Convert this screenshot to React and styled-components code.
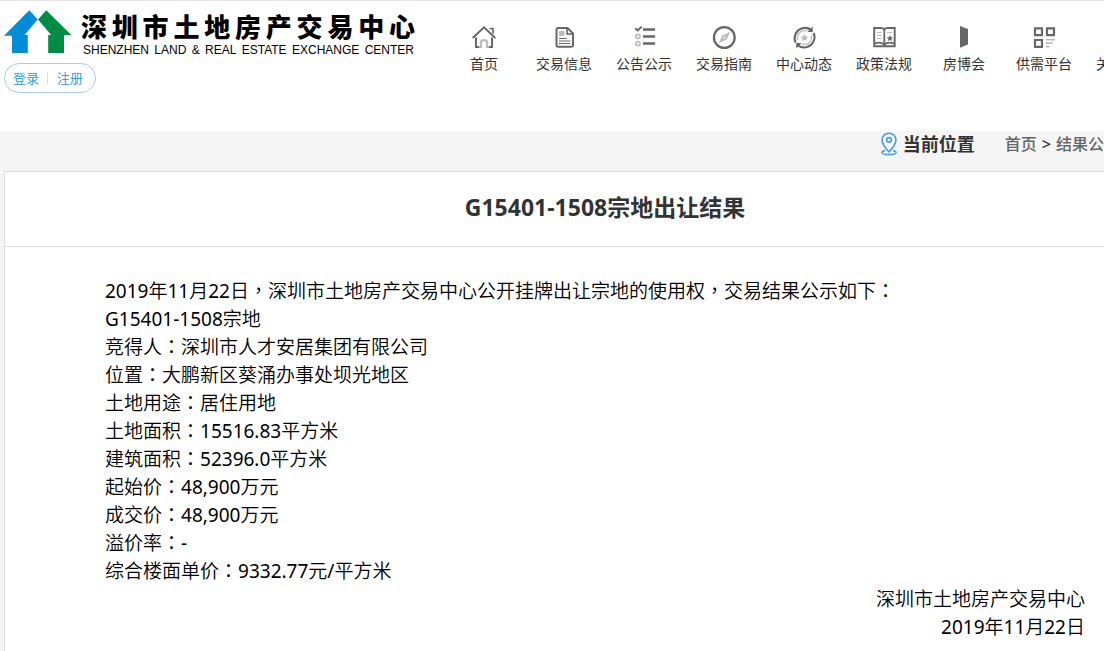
import React from 'react';
import styled, { createGlobalStyle } from 'styled-components';

const GlobalStyle = createGlobalStyle`
  * {
    box-sizing: border-box;
  }

  body {
    margin: 0;
    overflow-x: hidden;
    background: #fff;
    color: #000;
    font-family: "Noto Sans", "Noto Sans CJK SC", sans-serif;
  }

  a {
    color: inherit;
    text-decoration: none;
  }
`;

const Page = styled.div`
  min-width: 1206px;
  border-top: 1px solid #e6e6e6;
`;

const Header = styled.header`
  display: flex;
  height: 130px;
  padding-left: 4px;
`;

const Brand = styled.div`
  width: 440px;
`;

const Logo = styled.a`
  display: flex;
  gap: 9px;
  padding-top: 9px;
  color: #000;
`;

const LogoText = styled.div`
  width: 334px;
`;

const LogoName = styled.div`
  display: flex;
  justify-content: space-between;
  font-size: 26px;
  font-weight: 900;
  line-height: 34px;
`;

const LogoSub = styled.div`
  display: flex;
  justify-content: space-between;
  padding: 0 1px 0 2px;
  font-family: "Liberation Sans", sans-serif;
  font-size: 12px;
  line-height: 12px;
`;

const Account = styled.div`
  display: inline-flex;
  align-items: center;
  height: 30px;
  margin-top: 7px;
  padding: 0 12px 0 8px;
  border: 1px solid #a9c8fb;
  border-radius: 15px;
  color: #1296e6;
  font-family: "Noto Sans", "Noto Sans CJK SC DemiLight", "Noto Sans CJK SC", sans-serif;
  font-size: 13px;
  line-height: 20px;
`;

const Divider = styled.span`
  width: 1px;
  height: 12px;
  margin: 0 9px 0 8px;
  background: #ddd;
`;

const Nav = styled.nav`
  display: flex;
`;

const NavItem = styled.a`
  display: flex;
  flex-direction: column;
  align-items: center;
  gap: 5px;
  width: 80px;
  padding-top: 24px;
  color: #333;
  font-size: 14px;
  line-height: 20px;
`;

const Main = styled.main`
  padding-left: 4px;
  background: #f5f5f5;
`;

const Crumbs = styled.div`
  display: flex;
  justify-content: flex-end;
  height: 40px;
  padding-right: 86px;
  color: #666;
  font-size: 16px;
  font-weight: 500;
  line-height: 26px;

  > svg {
    margin: 1px 5px 0 0;
  }
`;

const CrumbTitle = styled.strong`
  margin-right: 30px;
  color: #333;
  font-size: 18px;
`;

const Arrow = styled.span`
  margin: 0 5px;
  color: #333;
`;

const Card = styled.article`
  border: 1px solid #ddd;
  background: #fff;
`;

const Title = styled.h1`
  margin: 0;
  padding: 19px 0 23px;
  border-bottom: 1px solid #ddd;
  color: #333;
  font-size: 23px;
  line-height: 32px;
  text-align: center;
`;

const Content = styled.div`
  padding: 30px 120px 40px 100px;
  font-family: "Noto Sans", "Noto Sans CJK SC DemiLight", "Noto Sans CJK SC", sans-serif;
  font-size: 19px;
  line-height: 28px;
`;

const Line = styled.p`
  margin: 0;
  text-align: ${props => props.$align || 'left'};
`;

const Mark = styled.span`
  font-family: "Noto Sans CJK TC DemiLight", "Noto Sans CJK TC", sans-serif;
  line-height: 1;
`;

const NAME = '深圳市土地房产交易中心';

const DARK = '#666';
const LIGHT = '#bbb';

const STAR = 'M0 -4 L1.2 -1.3 L4 -1.1 L1.9 .8 L2.6 3.6 L0 2.1 L-2.6 3.6 L-1.9 .8 L-4 -1.1 L-1.2 -1.3 Z';

const icons = {
  home: (
    <>
      <path d="M.7 13 L12 2.3 L23.3 13" stroke={DARK} strokeWidth="1.9" />
      <path d="M17.5 3.5 H21 V8.5" stroke={DARK} strokeWidth="1.7" />
      <path d="M4 12.5 V22 H7.4 M20 12.5 V22 H16.6" stroke={DARK} strokeWidth="2" />
      <path d="M9 23 V17.5 Q9 15.2 12 15.2 T15 17.5 V23" stroke={LIGHT} strokeWidth="2.2" />
    </>
  ),
  doc: (
    <>
      <path d="M6 3 H15.5 L21 8.5 V20 Q21 21.7 19.3 21.7 H6 Q4.5 21.7 4.5 20 V4.6 Q4.5 3 6 3 Z" stroke={DARK} strokeWidth="2" />
      <path d="M15 3.5 V9 H20.5" stroke={DARK} strokeWidth="1.6" />
      <rect x="7" y="6" width="5.5" height="5" rx="1" fill={LIGHT} />
      <path d="M7 13.5 H14.5 M7 16 H18.5 M7 18.5 H18.5" stroke={DARK} strokeWidth="1.2" />
    </>
  ),
  list: (
    <>
      <path d="M3.2 3.2 L5.7 5.4 L9.6 1.8" stroke={DARK} strokeWidth="2.1" />
      <path d="M11 4.5 H23 M11 11.5 H23 M11 18.5 H23" stroke={DARK} strokeWidth="2.6" />
      <circle cx="6" cy="11.4" r="2.1" stroke={LIGHT} strokeWidth="1.7" />
      <circle cx="6" cy="18.6" r="2.1" stroke={LIGHT} strokeWidth="1.7" />
    </>
  ),
  compass: (
    <>
      <circle cx="12.3" cy="12.5" r="10.4" stroke={DARK} strokeWidth="2.2" />
      <path d="M18.3 6.8 L14.6 14.6 L6.6 18.3 L10.2 10.4 Z" fill={LIGHT} />
      <circle cx="12.4" cy="12.5" r="1" fill="#fff" />
    </>
  ),
  news: (
    <>
      <path d="M3.6 17.5 A10.4 10.4 0 0 1 19.2 4.8 M21.6 8 A10.4 10.4 0 0 1 6.2 20.7" stroke={DARK} strokeWidth="2.2" />
      <path d="M20.7 1.6 V7 H15.4 Z M4.2 23.5 V18 H9.6 Z" fill={DARK} />
      <path d="M5.8 15 A7.2 7.2 0 0 1 15 6 M19.1 10 A7.2 7.2 0 0 1 10 19.2" stroke={LIGHT} strokeWidth="1.3" />
      <path d={STAR} transform="translate(12.5 12.7)" fill={LIGHT} />
    </>
  ),
  book: (
    <>
      <path d="M12.3 4.3 Q11 3 9 3 H2.2 V21.3 H22.7 V3 H15.5 Q13.3 3 12.3 4.3 Z" stroke={DARK} strokeWidth="1.9" />
      <path d="M12.3 4 V20.5" stroke={DARK} strokeWidth="1.8" />
      <path d="M2.5 18.6 Q9 16.2 12.3 19.8 Q15.8 16.2 22.5 18.6" stroke={DARK} strokeWidth="1.7" />
      <path d="M5 7.5 H9.5 M5 10.5 H9.5 M5 13.5 H9.5 M15 7.5 H20" stroke={LIGHT} strokeWidth="1.2" />
      <path d={STAR} transform="translate(17.9 13.2) scale(.8)" fill={DARK} />
    </>
  ),
  door: <path d="M8 1 L16 4 V19.5 L8 22.8 Z" fill={DARK} />,
  grid: (
    <>
      <path d="M3 3.3 H10 V10.2 H3 Z M15 3.3 H22 V10.2 H15 Z M3 15 H10 V21.9 H3 Z" stroke={DARK} strokeWidth="2.2" />
      <path d="M14 14.7 H23 M14 18.1 H20.7 M14 21.6 H17.4" stroke={LIGHT} strokeWidth="1.6" />
    </>
  ),
  people: (
    <>
      <circle cx="12" cy="7.5" r="4.5" stroke={DARK} strokeWidth="2" />
      <path d="M3 22 Q3 14.5 12 14.5 T21 22 Z" stroke={DARK} strokeWidth="2" />
    </>
  ),
};

const menu = [
  { icon: 'home', label: '首页' },
  { icon: 'doc', label: '交易信息' },
  { icon: 'list', label: '公告公示' },
  { icon: 'compass', label: '交易指南' },
  { icon: 'news', label: '中心动态' },
  { icon: 'book', label: '政策法规' },
  { icon: 'door', label: '房博会' },
  { icon: 'grid', label: '供需平台' },
  { icon: 'people', label: '关于我们' },
];

const lines = [
  '2019年11月22日，深圳市土地房产交易中心公开挂牌出让宗地的使用权，交易结果公示如下：',
  'G15401-1508宗地',
  '竞得人：深圳市人才安居集团有限公司',
  '位置：大鹏新区葵涌办事处坝光地区',
  '土地用途：居住用地',
  '土地面积：15516.83平方米',
  '建筑面积：52396.0平方米',
  '起始价：48,900万元',
  '成交价：48,900万元',
  '溢价率：-',
  '综合楼面单价：9332.77元/平方米',
];

// full-width commas and colons sit in the middle of their cell
const withMarks = text => text.split(/([，：])/).map((part, i) => (
  i % 2 ? <Mark key={i}>{part}</Mark> : part
));

const LogoMark = () => (
  <svg width="68" height="44" viewBox="4 10 68 44" aria-hidden="true">
    <path d="M29.3 10.3 L37.6 19.4 L24.6 35 H27.8 V53 H12 V35.8 H4 Z" fill="#008cd6" />
    <path d="M46.3 10.3 L38 19.4 L51.2 35 H48.2 V53 H64 V35.2 H71.5 Z" fill="#008c44" />
  </svg>
);

const PinIcon = () => (
  <svg width="18" height="24" viewBox="0 0 18 24" fill="none" stroke="#3a9bec" strokeWidth="1.5" aria-hidden="true">
    <path d="M9 20 Q2 12.5 2 8 A7 6.8 0 0 1 16 8 Q16 12.5 9 20 Z" />
    <circle cx="9" cy="7.8" r="2.4" />
    <path d="M5 18.6 Q1.8 19.4 1.8 20.6 Q2.4 22.6 9 22.6 T16.2 20.6 Q16.2 19.4 13 18.6" />
  </svg>
);

const App = () => (
  <Page>
    <GlobalStyle />
    <Header>
      <Brand>
        <Logo href="#" aria-label={NAME}>
          <LogoMark />
          <LogoText>
            <LogoName>
              {NAME.split('').map(char => <span key={char}>{char}</span>)}
            </LogoName>
            <LogoSub>
              {'SHENZHEN LAND & REAL ESTATE EXCHANGE CENTER'.split(' ').map(word => (
                <span key={word}>{word}</span>
              ))}
            </LogoSub>
          </LogoText>
        </Logo>
        <Account>
          <a href="#login">登录</a>
          <Divider />
          <a href="#register">注册</a>
        </Account>
      </Brand>
      <Nav>
        {menu.map(item => (
          <NavItem key={item.label} href="#">
            <svg width="24" height="24" viewBox="0 0 24 24" fill="none" aria-hidden="true">
              {icons[item.icon]}
            </svg>
            {item.label}
          </NavItem>
        ))}
      </Nav>
    </Header>

    <Main>
      <Crumbs>
        <PinIcon />
        <CrumbTitle>当前位置</CrumbTitle>
        <a href="#">首页</a>
        <Arrow>&gt;</Arrow>
        <a href="#result">结果公示</a>
      </Crumbs>
      <Card>
        <Title>G15401-1508宗地出让结果</Title>
        <Content>
          {lines.map(line => <Line key={line}>{withMarks(line)}</Line>)}
          <Line $align="right">{NAME}</Line>
          <Line $align="right">2019年11月22日</Line>
        </Content>
      </Card>
    </Main>
  </Page>
);

export default App;
